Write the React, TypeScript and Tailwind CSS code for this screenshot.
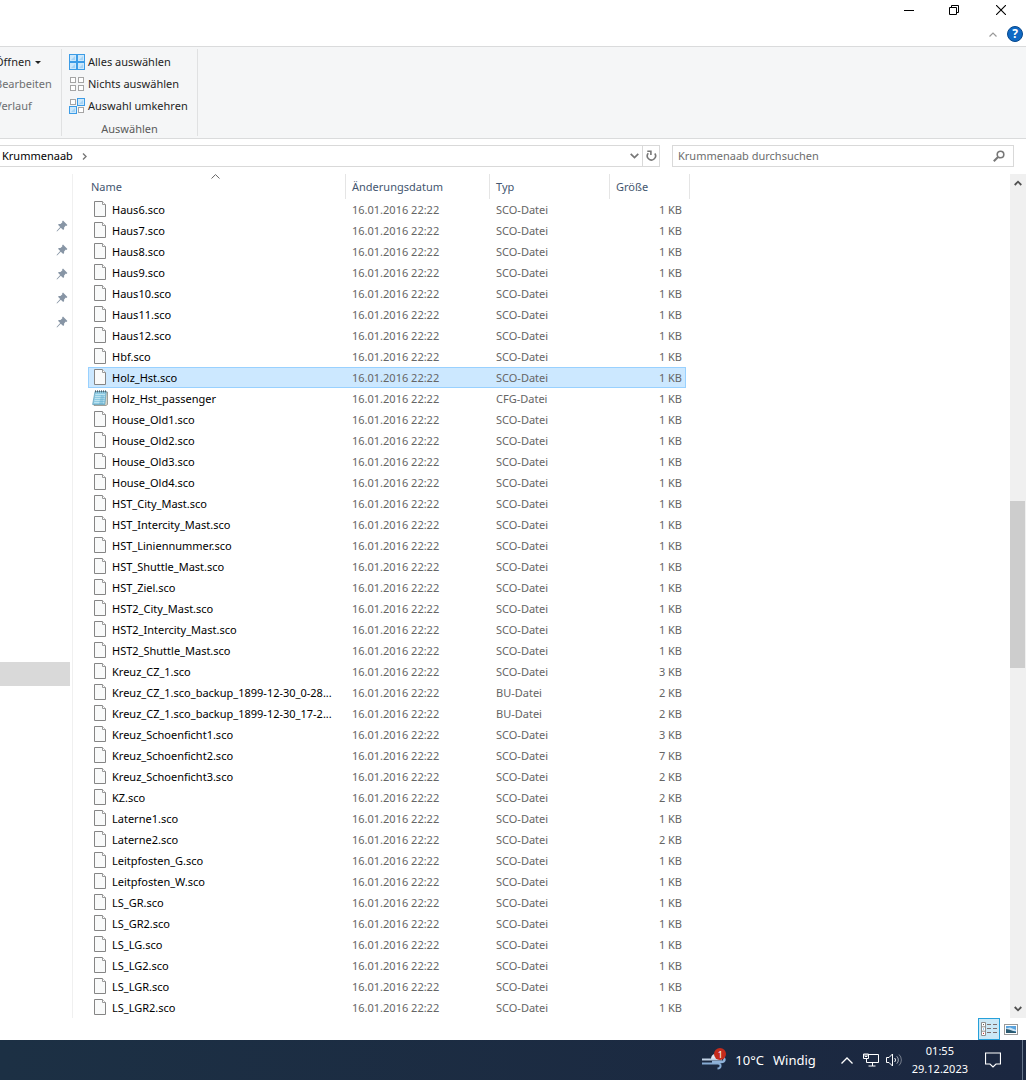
import type React from "react"

interface FileRow {
  name: string
  size: number
  type?: string
  selected?: boolean
}

const files: FileRow[] = [
  { name: "Haus6.sco", size: 1 },
  { name: "Haus7.sco", size: 1 },
  { name: "Haus8.sco", size: 1 },
  { name: "Haus9.sco", size: 1 },
  { name: "Haus10.sco", size: 1 },
  { name: "Haus11.sco", size: 1 },
  { name: "Haus12.sco", size: 1 },
  { name: "Hbf.sco", size: 1 },
  { name: "Holz_Hst.sco", size: 1, selected: true },
  { name: "Holz_Hst_passenger", size: 1, type: "CFG-Datei" },
  { name: "House_Old1.sco", size: 1 },
  { name: "House_Old2.sco", size: 1 },
  { name: "House_Old3.sco", size: 1 },
  { name: "House_Old4.sco", size: 1 },
  { name: "HST_City_Mast.sco", size: 1 },
  { name: "HST_Intercity_Mast.sco", size: 1 },
  { name: "HST_Liniennummer.sco", size: 1 },
  { name: "HST_Shuttle_Mast.sco", size: 1 },
  { name: "HST_Ziel.sco", size: 1 },
  { name: "HST2_City_Mast.sco", size: 1 },
  { name: "HST2_Intercity_Mast.sco", size: 1 },
  { name: "HST2_Shuttle_Mast.sco", size: 1 },
  { name: "Kreuz_CZ_1.sco", size: 3 },
  { name: "Kreuz_CZ_1.sco_backup_1899-12-30_0-28...", size: 2, type: "BU-Datei" },
  { name: "Kreuz_CZ_1.sco_backup_1899-12-30_17-2...", size: 2, type: "BU-Datei" },
  { name: "Kreuz_Schoenficht1.sco", size: 3 },
  { name: "Kreuz_Schoenficht2.sco", size: 7 },
  { name: "Kreuz_Schoenficht3.sco", size: 2 },
  { name: "KZ.sco", size: 2 },
  { name: "Laterne1.sco", size: 1 },
  { name: "Laterne2.sco", size: 2 },
  { name: "Leitpfosten_G.sco", size: 1 },
  { name: "Leitpfosten_W.sco", size: 1 },
  { name: "LS_GR.sco", size: 1 },
  { name: "LS_GR2.sco", size: 1 },
  { name: "LS_LG.sco", size: 1 },
  { name: "LS_LG2.sco", size: 1 },
  { name: "LS_LGR.sco", size: 1 },
  { name: "LS_LGR2.sco", size: 1 },
]

const FileIcon = () => (
  <svg width="14" height="17" viewBox="0 0 14 17" fill="none" className="shrink-0">
    <path d="M1.5 .5H9.5L12.5 3.5V15.5H1.5Z" fill="#f9fafa" stroke="#858585" />
    <path d="M9.5 .5V3.5H12.5" fill="#fff" stroke="#9a9a9a" />
  </svg>
)

const NotepadIcon = () => (
  <svg width="16" height="17" viewBox="0 0 16 17" fill="none" className="-mx-px shrink-0">
    <path d="M4 2H15.5V14.5L14 15.5H2Z" fill="#d8d5c8" stroke="#8d8d86" strokeWidth=".8" />
    <path d="M3 1.5H14.3L12.8 14.5H.6Z" fill="#8fcbe3" stroke="#5f9db8" strokeWidth=".7" />
    <path d="M3.4 4.5H13M3.1 6.5H12.8M2.8 8.5H12.6M2.5 10.5H12.4M2.2 12.5H12.2" stroke="#c9eaf5" strokeWidth=".8" />
    <path d="M9 5L12 6L11 14H7Z" fill="#4d9fc0" opacity=".35" />
    <path d="M3.5 .3V2.4M5.5 .3V2.4M7.5 .3V2.4M9.5 .3V2.4M11.5 .3V2.4M13.5 .3V2.4" stroke="#4a5a64" strokeWidth=".9" />
  </svg>
)

const PinIcon = () => (
  <svg width="12" height="12" viewBox="0 0 12 12" className="shrink-0">
    <path d="M7 .6L11.4 5L10.5 5.9L9.8 5.6L8.1 7.5L8.1 9.1L7.2 10L4.8 7.7L1.3 11.2L.6 11.4L.8 10.7L4.2 7.1L2 4.8L2.9 3.9L4.5 3.9L6.4 2.2L6.1 1.5Z" fill="#8795a5" />
  </svg>
)

const Tile = ({ x, y, on }: { x: number; y: number; on?: boolean }) =>
  on ? (
    <g>
      <rect x={x + 0.5} y={y + 0.5} width="7" height="7" fill="#cde8fb" stroke="#3c9ce6" />
      <path d={`M${x + 2} ${y + 6}L${x + 6} ${y + 2}V${y + 6}Z`} fill="#a5d3f5" />
    </g>
  ) : (
    <rect x={x + 1.5} y={y + 1.5} width="5" height="5" fill="#fff" stroke="#a5a5a5" />
  )

const SelectIcon = ({ tiles }: { tiles: boolean[] }) => (
  <svg width="16" height="16" viewBox="0 0 16 16" className="shrink-0">
    {tiles.map((on, i) => (
      <Tile key={i} x={(i % 2) * 8} y={i < 2 ? 0 : 8} on={on} />
    ))}
  </svg>
)

const RibbonButton = ({ children, muted }: { children: React.ReactNode; muted?: boolean }) => (
  <button className={`flex h-[22px] items-center gap-[3px] whitespace-nowrap ${muted ? "text-[#6d6f71]" : "text-[#1e1e1e]"}`}>
    {children}
  </button>
)

const TitleBar = () => (
  <header className="h-[46px]">
    <div className="flex h-5 justify-end">
      <button aria-label="Minimieren" className="flex w-[46px] items-center justify-center">
        <svg width="10" height="10" viewBox="0 0 10 10"><path d="M0 5.5H10" stroke="#000" /></svg>
      </button>
      <button aria-label="Verkleinern" className="flex w-[44px] items-center justify-center">
        <svg width="10" height="10" viewBox="0 0 10 10" fill="none" stroke="#000">
          <path d="M.5 2.5H7.5V9.5H.5ZM2.5 2.5V.5H9.5V7.5H7.5" />
        </svg>
      </button>
      <button aria-label="Schließen" className="flex w-[50px] items-center justify-center">
        <svg width="10" height="10" viewBox="0 0 10 10"><path d="M0 0L10 10M10 0L0 10" stroke="#000" strokeWidth="1.1" /></svg>
      </button>
    </div>
    <div className="flex items-center justify-end gap-[10px] pr-[3px] pt-[6px]">
      <button aria-label="Menüband minimieren">
        <svg width="8" height="5" viewBox="0 0 8 5" fill="none"><path d="M.5 4.5L4 1L7.5 4.5" stroke="#999" strokeWidth="1.2" /></svg>
      </button>
      <button aria-label="Hilfe" className="flex size-4 items-center justify-center rounded-full border border-[#07488c] bg-[#0f69c4] text-[12px] leading-none font-bold text-white">
        ?
      </button>
    </div>
  </header>
)

const Ribbon = () => (
  <section className="flex h-[93px] overflow-hidden border-y border-[#dadbdc] bg-[#f5f6f7] py-[2px]">
    <div className="w-[62px] border-r border-[#e0e1e2] pt-[2px]">
      <div className="-ml-[5px]">
        <RibbonButton>
          Öffnen
          <svg width="6" height="3" viewBox="0 0 6 3" className="ml-px"><path d="M0 0H6L3 3Z" fill="#222" /></svg>
        </RibbonButton>
        <RibbonButton muted>Bearbeiten</RibbonButton>
        <RibbonButton muted>Verlauf</RibbonButton>
      </div>
    </div>
    <div className="w-[136px] border-r border-[#e0e1e2] pl-[7px] pt-[2px]">
      <RibbonButton><SelectIcon tiles={[true, true, true, true]} />Alles auswählen</RibbonButton>
      <RibbonButton><SelectIcon tiles={[false, false, false, false]} />Nichts auswählen</RibbonButton>
      <RibbonButton><SelectIcon tiles={[false, true, true, false]} />Auswahl umkehren</RibbonButton>
      <div className="-ml-[7px] pt-[3px] text-center leading-[18px] text-[#5a5a5a]">Auswählen</div>
    </div>
  </section>
)

const AddressBar = () => (
  <div className="flex gap-3 pb-[7px] pr-3 pt-[6px]">
    <nav className="flex h-[22px] flex-1 items-center border border-l-0 border-[#d9d9d9]">
      <button className="pl-[2px] text-black">Krummenaab</button>
      <svg width="5" height="7" viewBox="0 0 5 7" fill="none" className="ml-[9px]"><path d="M1 .5L4 3.5L1 6.5" stroke="#777" strokeWidth="1.4" /></svg>
      <button aria-label="Vorherige Orte" className="ml-auto mr-[3px]">
        <svg width="9" height="6" viewBox="0 0 9 6" fill="none"><path d="M.7 .8L4.5 4.6L8.3 .8" stroke="#777" strokeWidth="1.7" /></svg>
      </button>
      <button aria-label="Aktualisieren" className="flex h-full w-[17px] items-center justify-center border-l border-[#d9d9d9]">
        <svg width="11" height="12" viewBox="0 0 11 12" fill="none" stroke="#777" strokeWidth="1.6">
          <path d="M2.3 3.2A4.1 4.1 0 1 0 8.8 3.5" />
          <path d="M1.3 1.2H4.9V5" />
        </svg>
      </button>
    </nav>
    <label className="flex h-[22px] w-[342px] items-center border border-[#d9d9d9] pl-[5px] pr-2">
      <input aria-label="Suche" placeholder="Krummenaab durchsuchen" className="min-w-0 flex-1 outline-none placeholder:text-[#6d6d6d]" />
      <svg width="12" height="12" viewBox="0 0 12 12" fill="none" stroke="#777">
        <circle cx="7.5" cy="4.5" r="3.3" strokeWidth="1.6" />
        <path d="M5 7L.8 11.2" strokeWidth="2" />
      </svg>
    </label>
  </div>
)

const NavPane = () => (
  <aside className="w-[73px] shrink-0 border-r border-[#f0f0f0] pt-10">
    {[1, 2, 3, 4, 5].map((n) => (
      <div key={n} className="flex h-6 items-center justify-end pr-1">
        <PinIcon />
      </div>
    ))}
    <div className="mt-[328px] h-6 w-[70px] bg-[#d9d9d9]" />
  </aside>
)

const HeadCell = ({ children }: { children: React.ReactNode }) => (
  <th scope="col" className="border-r border-[#e5e5e5] p-0 pl-[6px] text-left font-normal text-[#44566f]">
    {children}
  </th>
)

const cell = (selected?: boolean) =>
  `flex h-[21px] items-center whitespace-nowrap ${selected ? "border-y border-[#99d1ff] bg-[#cce8ff]" : ""}`

const FileTable = () => (
  <table className="ml-[15px] w-[602px] table-fixed border-separate border-spacing-0 self-start">
    <colgroup>
      <col className="w-[258px]" />
      <col className="w-[144px]" />
      <col className="w-[120px]" />
      <col className="w-[80px]" />
    </colgroup>
    <thead>
      <tr className="h-[25px]">
        <th scope="col" className="relative border-r border-[#e5e5e5] p-0 pl-[3px] text-left font-normal text-[#44566f]">
          Name
          <svg width="9" height="5" viewBox="0 0 9 5" fill="none" className="absolute left-1/2 top-0 -ml-[6px]">
            <path d="M.5 4.5L4.5 .6L8.5 4.5" stroke="#666" />
          </svg>
        </th>
        <HeadCell>Änderungsdatum</HeadCell>
        <HeadCell>Typ</HeadCell>
        <HeadCell>Größe</HeadCell>
      </tr>
    </thead>
    <tbody className="text-[#656565]">
      {files.map(({ name, size, type = "SCO-Datei", selected }) => (
        <tr key={name}>
          <td className="p-0">
            <div className={`${cell(selected)} gap-[5px] text-black ${selected ? "border-l pl-1" : "pl-[5px]"}`}>
              {type === "CFG-Datei" ? <NotepadIcon /> : <FileIcon />}
              {name}
            </div>
          </td>
          <td className="p-0">
            <div className={`${cell(selected)} pl-[6px]`}>16.01.2016 22:22</div>
          </td>
          <td className="p-0">
            <div className={`${cell(selected)} pl-[6px]`}>{type}</div>
          </td>
          <td className="p-0">
            <div className={`${cell(selected)} mr-1 justify-end ${selected ? "border-r pr-[3px]" : "pr-1"}`}>{size} KB</div>
          </td>
        </tr>
      ))}
    </tbody>
  </table>
)

const ScrollBar = () => (
  <div className="ml-auto flex w-4 flex-col bg-[#f0f0f0]">
    <button aria-label="Nach oben" className="flex h-[18px] items-center justify-center">
      <svg width="8" height="6" viewBox="0 0 8 6" fill="none"><path d="M.7 5L4 1.7L7.3 5" stroke="#505050" strokeWidth="1.8" /></svg>
    </button>
    <div className="flex flex-1 flex-col">
      <div className="grow-[309]" />
      <div className="mr-px grow-[167] bg-[#cdcdcd]" />
      <div className="grow-[332]" />
    </div>
    <button aria-label="Nach unten" className="flex h-[18px] items-center justify-center">
      <svg width="8" height="6" viewBox="0 0 8 6" fill="none"><path d="M.7 1L4 4.3L7.3 1" stroke="#505050" strokeWidth="1.8" /></svg>
    </button>
  </div>
)

const StatusBar = () => (
  <div className="flex h-[22px] items-center justify-end gap-1 pr-2">
    <button aria-label="Details" className="flex h-[22px] w-[22px] items-center justify-center border border-[#26a0da] bg-[#cbe8f6]">
      <svg width="16" height="14" viewBox="0 0 16 14" fill="none">
        <path d="M.5 .5H4.5V13.5H.5ZM.5 4.8H4.5M.5 9.2H4.5" fill="#fff" stroke="#8f8f8f" />
        <path d="M2 2.6H3" stroke="#555" />
        <path d="M2 7H3" stroke="#2c8de0" />
        <path d="M2 11.4H3" stroke="#c22" />
        <path d="M6 2.5H10M12 2.5H16M6 6.5H10M12 6.5H16M6 10.5H10M12 10.5H16" stroke="#7d6f6f" />
      </svg>
    </button>
    <button aria-label="Große Symbole">
      <svg width="14" height="11" viewBox="0 0 14 11">
        <rect x=".5" y=".5" width="13" height="10" fill="#fff" stroke="#999" />
        <rect x="2" y="2" width="10" height="7" fill="#5aa3dd" />
        <path d="M2 4.5L6 3.5L12 6V7H2Z" fill="#cfe6f5" />
        <path d="M2 5L5 5.5L12 8V9H2Z" fill="#2b5a70" />
      </svg>
    </button>
  </div>
)

const TaskBar = () => (
  <footer className="flex h-10 items-center justify-end bg-linear-to-r from-[#1c3044] to-[#1b2740] text-white">
    <button className="flex items-center gap-[9px] text-[13px]">
      <span className="relative">
        <svg width="24" height="20" viewBox="0 0 24 20" fill="none">
          <path d="M9 9C9 2 19 2 19 9Z" fill="#dce8f5" />
          <path d="M0 9.5H20" stroke="#c3d3e6" strokeWidth="2" />
          <path d="M0 13.5H16C19.5 13.5 19.5 18.5 15.5 18.5" stroke="#86abd3" strokeWidth="2" />
          <path d="M10 12H19.5C23 12 23 9 21.5 8" stroke="#8fb2d8" strokeWidth="2.4" />
        </svg>
        <span className="absolute -top-[2px] left-[12px] flex size-[12px] items-center justify-center rounded-full bg-[#c42b1c] text-[9px] leading-none">1</span>
      </span>
      <span>10°C</span>
      <span>Windig</span>
    </button>
    <button aria-label="Ausgeblendete Symbole" className="ml-[25px]">
      <svg width="12" height="7" viewBox="0 0 12 7" fill="none"><path d="M.5 6.5L6 1L11.5 6.5" stroke="#fff" strokeWidth="1.3" /></svg>
    </button>
    <button aria-label="Netzwerk" className="ml-[10px]">
      <svg width="16" height="14" viewBox="0 0 16 14" fill="none" stroke="#fff">
        <path d="M6 1.5H15.5V9.5H3.5V6M9.5 9.5V13M5.5 13H12.5" />
        <path d="M.5 1V5.5H5.5V1ZM2 1V3.5H4V1" />
      </svg>
    </button>
    <button aria-label="Lautstärke" className="ml-[7px]">
      <svg width="17" height="14" viewBox="0 0 17 14" fill="none" stroke="#fff">
        <path d="M.5 4.5H3L6.5 1V13L3 9.5H.5Z" />
        <path d="M8.7 5A3 3 0 0 1 8.7 9" />
        <path d="M10.8 3.3A5.2 5.2 0 0 1 10.8 10.7" opacity=".6" />
        <path d="M13 1.5A7.6 7.6 0 0 1 13 12.5" opacity=".4" />
      </svg>
    </button>
    <button className="ml-[9px] text-center text-[11px] leading-[18px]">
      <time className="block">01:55</time>
      <time className="block">29.12.2023</time>
    </button>
    <button aria-label="Benachrichtigungen" className="ml-[17px] mr-[21px]">
      <svg width="16" height="16" viewBox="0 0 16 16" fill="none"><path d="M.5 1H15.5V12H11L8 15L5 12H.5Z" stroke="#fff" strokeWidth="1.2" /></svg>
    </button>
    <div className="h-full w-1 border-l border-[#66758a]" />
  </footer>
)

export default function App() {
  return (
    <div className="flex min-h-screen flex-col overflow-x-hidden bg-white font-['Noto_Sans','Open_Sans',sans-serif] text-[11px] leading-4">
      <TitleBar />
      <Ribbon />
      <AddressBar />
      <main className="flex flex-1">
        <NavPane />
        <FileTable />
        <ScrollBar />
      </main>
      <StatusBar />
      <TaskBar />
    </div>
  )
}
